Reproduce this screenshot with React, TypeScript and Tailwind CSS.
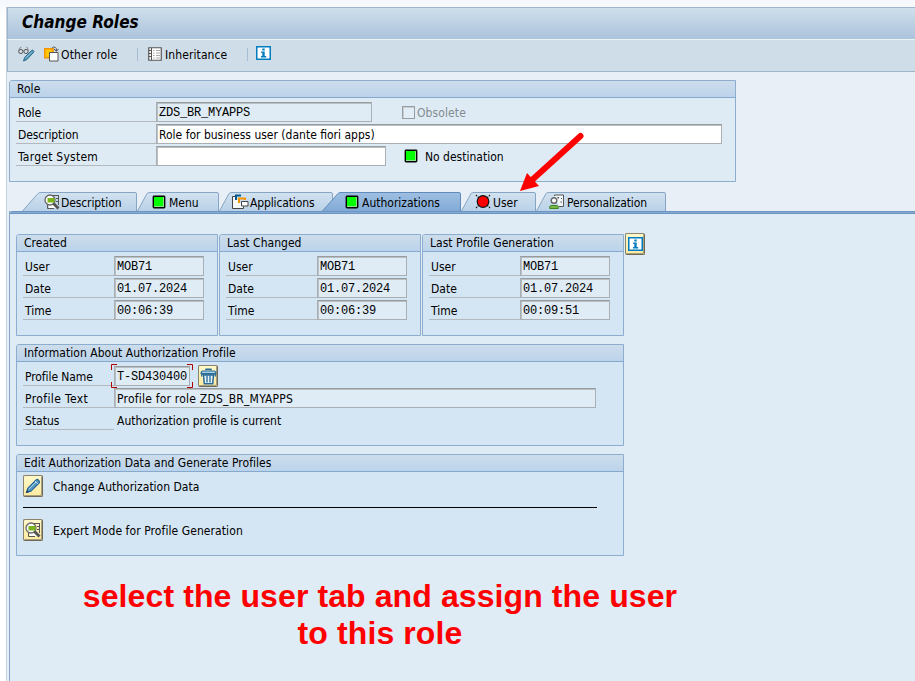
import React from "react";

const MagnifierIcon = () => (
  <svg width="16" height="16" viewBox="0 0 16 16" className="shrink-0" fill="none">
    <path d="M8 1.500h3M3.500 11v3.500H10M14.500 1v10" stroke="#555" strokeWidth="1" />
    <path d="M10 1.500h5M12 4.500h3M12 7.500h3" stroke="#555" strokeWidth="1" />
    <path d="M8 10h5v4H5v-3z" fill="#fff" />
    <circle cx="6" cy="6" r="5" fill="#fff" stroke="#666" strokeWidth="1.300" />
    <path d="M3.500 4h7v4.500h-7z" fill="#7ab51d" />
    <path d="M9.500 9.500l5 5" stroke="#555" strokeWidth="3" />
  </svg>
);

const GreenSquare = () => (
  <span className="block h-[12px] w-[12px] shrink-0 rounded-[1px] border border-black bg-[#00ff00] shadow-[inset_-1px_-1px_0_#8fe08f,0_0_0_0.4px_#000]" />
);

const StackIcon = () => (
  <svg width="17" height="16" viewBox="0 0 17 16" className="shrink-0" fill="none">
    <path d="M3 2.500H.5v12h11v-2" fill="#f7fafc" stroke="#444" />
    <path d="M4 6V1.500h5" stroke="#005b8c" strokeWidth="2" />
    <path d="M7 9V4.500h6V6" stroke="#f59300" strokeWidth="2" />
    <path d="M9.500 7.500h6.500v4.500H9.500z" fill="#fff" stroke="#444" />
  </svg>
);

const RedStatusIcon = () => (
  <svg width="16" height="15" viewBox="0 0 16 15" className="shrink-0">
    <path d="M1 1l3 3M15 1l-3 3M1 14l3-3M15 14l-3-3" stroke="#111" strokeWidth="1.100" strokeDasharray="1.400 1" />
    <circle cx="8" cy="7.500" r="5.800" fill="#ff0000" stroke="#111" strokeWidth="1.200" />
  </svg>
);

const PersonIcon = () => (
  <svg width="16" height="16" viewBox="0 0 16 16" className="shrink-0" fill="none">
    <path d="M5.500 2V1h9v11.500H10" fill="#f1f6fa" stroke="#555" />
    <path d="M8.500 3h1.500v1.500H8.500zM12 4h1v1h-1zM11.500 7.500h1.500v1h-1.500z" fill="#555" />
    <circle cx="5" cy="6.500" r="2.800" fill="#fff" stroke="#666" strokeWidth="1.400" />
    <path d="M.7 14.500v-1.500Q.7 11.500 3 11.500h4q2.300 0 2.300 1.500v1.500z" fill="#7ab648" stroke="#3d8a20" />
  </svg>
);

const InfoIcon = () => (
  <svg width="15" height="14" viewBox="0 0 15 14" className="shrink-0">
    <path d="M.75.75h13.500v12.500H.75z" fill="#fff" stroke="#007cc0" strokeWidth="1.500" />
    <path d="M6.300 2.500h2.400v2H6.300zM5.200 5.500h3.500v4.500h1.500v1.500H5V10h1.300V7H5.200z" fill="#007cc0" />
  </svg>
);

const PencilIcon = () => (
  <svg width="16" height="16" viewBox="0 0 16 16" fill="none">
    <path d="M1.500 14.500l1.300-4.300 8.300-8.300q1.200-1 2.300.2l.7.800q1 1.200 0 2.200L5.800 13.300z" fill="#5799c2" stroke="#1f5f91" strokeWidth="1.100" />
    <path d="M4 11l7-7M10 3l3 3" stroke="#a9d2ea" />
    <path d="M1 15l1.200-3 2 2z" fill="#1f3f5f" />
  </svg>
);

const TrashIcon = () => (
  <svg width="17" height="17" viewBox="0 0 17 17" fill="none">
    <path d="M6 2.500V1.200h5v1.300" stroke="#286b98" strokeWidth="1.400" />
    <path d="M2.500 3h12q1.500.5 1.500 2.500H1Q1 3.500 2.500 3z" fill="#a9cfe2" stroke="#286b98" strokeWidth="1.200" />
    <path d="M1.700 8.500V6h13.600v2.500" stroke="#286b98" strokeWidth="1.300" />
    <path d="M3.500 7l.8 8.800h8.400L13.500 7z" fill="#e8f4f8" stroke="#286b98" strokeWidth="1.500" />
    <path d="M7 7.500v7M10 7.500v7" stroke="#286b98" strokeWidth="1.300" />
  </svg>
);

const DisplayChangeIcon = () => (
  <svg width="17" height="16" viewBox="0 0 17 16" className="shrink-0" fill="none">
    <circle cx="2.800" cy="5.500" r="2.100" stroke="#555" />
    <circle cx="8" cy="5.500" r="2.100" stroke="#555" />
    <path d="M.7 5Q1 1.500 3.500 1M5 5h1M10.200 5Q10 1.500 8.500 .8" stroke="#777" strokeWidth=".9" />
    <path d="M5.500 15l1.200-3.600 6.800-6.900q1-.8 1.800 0 1 1 .2 1.900L8.800 13.600z" fill="#5799b8" stroke="#286b8a" />
    <path d="M8 11.800l5.500-5.600" stroke="#a5cfe0" strokeWidth=".8" />
  </svg>
);

const OtherRoleIcon = () => (
  <svg width="15" height="16" viewBox="0 0 15 16" className="shrink-0" fill="none">
    <path d="M.75 2.750H9v9H.75z" fill="#ffc60a" stroke="#f59300" strokeWidth="1.500" />
    <path d="M5.500 6.500h8.500v8.500H5.500z" fill="#fff" stroke="#555" />
    <path d="M8 2q1.500-1.500 3-.8Q12.800 2 12.500 5M10 3l2.500 2.300L14.500 3" stroke="#555" />
  </svg>
);

const InheritanceIcon = () => (
  <svg width="14" height="14" viewBox="0 0 14 14" className="shrink-0" fill="none">
    <path d="M.75.75h12.500v12.500H.75z" fill="#fff" stroke="#555" strokeWidth="1.200" />
    <path d="M3.500 1v12" stroke="#555" />
    <path d="M1 3.500h2M1 6.500h2M1 9.500h2" stroke="#555" />
    <path d="M5 3.500h1.500M5 6h1.500M5 8.500h1.500M5 11h1.500M8 3.500h4M8 6h4M8 8.500h4M8 11h4" stroke="#aaa" />
  </svg>
);

type TabProps = {
  label: string;
  icon: React.ReactNode;
  width: number;
  slope: number;
  active?: boolean;
  className: string;
};

function Tab({ label, icon, width, slope, active, className }: TabProps) {
  const id = "tab-" + label;
  return (
    <button className={"relative flex h-[19px] shrink-0 items-center text-left " + className}>
      <svg className="absolute inset-0" width={width} height="19" fill="none">
        <defs>
          <linearGradient id={id} x2="0" y2="1">
            <stop stopColor={active ? "#9fbfe2" : "#d2e2f0"} />
            <stop offset="1" stopColor={active ? "#82aad6" : "#b9d1e7"} />
          </linearGradient>
        </defs>
        <path
          d={`M.5 19L${slope - 2} 1.500Q${slope - 1} .5 ${slope + 1} .5H${width - 2}Q${width - 0.5} .5 ${width - 0.5} 2V19`}
          fill={`url(#${id})`}
          stroke={active ? "#5f8bba" : "#86a5c4"}
        />
      </svg>
      <span className="relative flex items-center">{icon}</span>
      <span className="relative top-px whitespace-nowrap">{label}</span>
    </button>
  );
}

function Panel({ title, className, children }: { title: string; className: string; children: React.ReactNode }) {
  return (
    <section className={"shrink-0 rounded-tl-[3px] border border-[#8dadce] " + className}>
      <h2 className="flex h-[17px] items-center rounded-tl-[2px] border-b border-[#86a9cd] bg-gradient-to-b from-[#cdddec] to-[#bbd3ea] pl-[7px] font-normal tracking-[0.03px] whitespace-nowrap">
        {title}
      </h2>
      {children}
    </section>
  );
}

const field =
  "flex h-5 items-center border border-[#a9afb3] border-t-[#979c9f] shadow-[inset_1px_1px_0_#b9bfc3] whitespace-nowrap shrink-0 ";
const mono = "font-['Liberation_Mono',monospace] text-[12px] tracking-[-0.2px] pt-[2px] ";

function Row({ label, labelClass, children }: { label: string; labelClass: string; children?: React.ReactNode }) {
  return (
    <div className="flex h-[22px] items-start">
      <div className={"flex h-5 shrink-0 items-center border-b border-[#b3b9be] pl-[2px] whitespace-nowrap " + labelClass}>
        <span className="pt-[2px]">{label}</span>
      </div>
      {children}
    </div>
  );
}

function Stamp({ title, time, className }: { title: string; time: string; className: string }) {
  return (
    <Panel title={title} className={"h-[102px] bg-[#d4e5f3] " + className}>
      <div className="pt-1 pl-[6px]">
        {[
          ["User", "MOB71"],
          ["Date", "01.07.2024"],
          ["Time", time],
        ].map(([k, v]) => (
          <Row key={k} label={k} labelClass="w-[91px]">
            <span className={field + mono + "w-[90px] bg-[#dfebf5] pl-[2px]"}>{v}</span>
          </Row>
        ))}
      </div>
    </Panel>
  );
}

const iconButton =
  "flex h-[22px] w-[20px] shrink-0 items-center justify-center rounded-[2px] border border-[#8a846c] border-r-[#6f6a58] border-b-[#6f6a58] shadow-[inset_-1px_-1px_0_#a8a07c] bg-gradient-to-b from-[#fff8c8] to-[#ffeaa0]";

export default function App() {
  return (
    <div className="relative h-[681px] w-[915px] overflow-hidden bg-gradient-to-b from-[#f4f8fc] via-white via-[3%] to-white pt-[7px] pl-[6px] font-['DejaVu_Sans_Condensed','DejaVu_Sans',sans-serif] text-[12px] leading-[14px] text-black font-stretch-condensed">
      <div className="flex h-[674px] w-[909px] flex-col border-l border-[#c5d2e2] bg-[#e8eff7]">
        <header className="flex h-[32px] shrink-0 items-center border-t border-l border-[#9db4ca] bg-gradient-to-b from-[#cfdfeb] to-[#abc3dc] pl-[14px]">
          <h1 className="pb-[4px] text-[17px] leading-5 font-bold tracking-[0.05px] italic">Change Roles</h1>
        </header>
        <nav className="flex h-[33px] shrink-0 items-center border-t border-b border-l border-t-[#eaf2f8] border-b-[#9fb5cb] border-l-[#9db4ca] bg-[#cfdde8] pb-[3px] pl-[10px]">
          <DisplayChangeIcon />
          <span className="ml-[9px]"><OtherRoleIcon /></span>
          <span className="ml-[2px] w-[76px] pt-[2px] tracking-[0.18px] whitespace-nowrap">Other role</span>
          <span className="h-[13px] w-px bg-[#a6bdd4]" />
          <span className="ml-[10px]"><InheritanceIcon /></span>
          <span className="ml-[3px] w-[82px] pt-[2px] tracking-[0.1px] whitespace-nowrap">Inheritance</span>
          <span className="h-[13px] w-px bg-[#a6bdd4]" />
          <span className="-mt-[3px] ml-[8px]"><InfoIcon /></span>
        </nav>

        <Panel title="Role" className="mt-[8px] ml-[2px] h-[102px] w-[727px] bg-[#deebf5]">
          <div className="pt-1 pl-[6px]">
            <Row label="Role" labelClass="w-[140px]">
              <span className={field + mono + "w-[216px] bg-[#dfebf5] pl-[2px]"}>ZDS_BR_MYAPPS</span>
              <span className="mt-1 ml-[30px] block h-[13px] w-[13px] border border-[#979da1] bg-[#e3edf5] shadow-[inset_1px_1px_0_#c6ccd0]" />
              <span className="ml-[2px] pt-[4px] tracking-[0.1px] text-[#858c91]">Obsolete</span>
            </Row>
            <Row label="Description" labelClass="w-[140px] tracking-[-0.1px]">
              <span className={field + "w-[566px] bg-white pt-px pl-[2px]"}>Role for business user (dante fiori apps)</span>
            </Row>
            <Row label="Target System" labelClass="w-[140px] tracking-[0.25px]">
              <span className={field + "w-[230px] bg-white"} />
              <span className="mt-[4px] ml-[19px]"><GreenSquare /></span>
              <span className="ml-[8px] pt-[4px]">No destination</span>
            </Row>
          </div>
        </Panel>

        <div className="mt-[10px] ml-[15px] flex h-[19px] shrink-0">
          <Tab label="Description" icon={<MagnifierIcon />} width={115} slope={18} className="w-[115px] gap-[1px] pl-[22px] tracking-[-0.1px]" />
          <Tab label="Menu" icon={<GreenSquare />} width={82} slope={12} className="w-[82px] gap-[4px] pl-[16px]" />
          <Tab label="Applications" icon={<StackIcon />} width={114} slope={12} className="w-[103px] gap-[1px] pl-[13px] tracking-[-0.13px]" />
          <Tab label="Authorizations" icon={<GreenSquare />} width={139} slope={18} active className="w-[139px] gap-[4px] pl-[24px]" />
          <Tab label="User" icon={<RedStatusIcon />} width={75} slope={12} className="w-[75px] gap-[2px] pl-[14px]" />
          <Tab label="Personalization" icon={<PersonIcon />} width={130} slope={12} className="w-[130px] gap-[2px] pl-[13px] tracking-[-0.13px]" />
        </div>

        <main className="ml-[2px] flex min-h-0 flex-1 flex-col border-l border-[#86a7ca] bg-[#dfebf5]">
          <div className="h-[3px] shrink-0 rounded-tl-[2px] border-y border-[#6b94c0] bg-[#85acd7]" />
          <div className="mt-[20px] ml-[6px] flex shrink-0 gap-px">
            <Stamp title="Created" time="00:06:39" className="w-[202px]" />
            <Stamp title="Last Changed" time="00:06:39" className="w-[202px]" />
            <Stamp title="Last Profile Generation" time="00:09:51" className="w-[202px]" />
            <button className={iconButton + " -mt-px"}><InfoIcon /></button>
          </div>

          <Panel title="Information About Authorization Profile" className="mt-[8px] ml-[6px] h-[102px] w-[608px] bg-[#d4e5f3]">
            <div className="pt-1 pl-[6px]">
              <Row label="Profile Name" labelClass="w-[91px] tracking-[-0.08px]">
                <span className="relative flex">
                  <span className={field + mono + "w-[76px] bg-[#dfebf5] pl-[2px]"}>T-SD430400</span>
                  <svg className="absolute -top-[2px] -left-[3px]" width="82" height="24" fill="none" stroke="#b00000">
                    <path d="M.5 6V.5H6M76 .5h5.500V6M.5 18v5.500H6M76 23.500h5.500V18" />
                  </svg>
                </span>
                <button className={iconButton + " -mt-px ml-[8px]"}><TrashIcon /></button>
              </Row>
              <Row label="Profile Text" labelClass="w-[91px] tracking-[0.38px]">
                <span className={field + "w-[482px] bg-[#dfebf5] pt-px pl-[2px] tracking-[0.22px]"}>Profile for role ZDS_BR_MYAPPS</span>
              </Row>
              <Row label="Status" labelClass="w-[91px]">
                <span className="ml-[3px] pt-[4px]">Authorization profile is current</span>
              </Row>
            </div>
          </Panel>

          <Panel title="Edit Authorization Data and Generate Profiles" className="mt-[8px] ml-[6px] h-[102px] w-[608px] bg-[#d4e5f3]">
            <div className="flex flex-col pt-[3px] pl-[6px]">
              <div className="flex items-center gap-[10px]">
                <button className={iconButton}><PencilIcon /></button>
                <span className="pt-[2px]">Change Authorization Data</span>
              </div>
              <hr className="mt-[10px] w-[574px] border-black" />
              <div className="mt-[11px] flex items-center gap-[10px]">
                <button className={iconButton}><MagnifierIcon /></button>
                <span className="pt-[2px] tracking-[0.08px]">Expert Mode for Profile Generation</span>
              </div>
            </div>
          </Panel>

          <p className="mt-[22px] ml-[20px] w-[700px] shrink-0 text-center font-['Liberation_Sans',Arial,sans-serif] text-[32px] leading-[37px] font-bold tracking-[0.1px] whitespace-nowrap text-[#ff0000]">
            select the user tab and assign the user
            <br />
            to this role
          </p>
        </main>
      </div>
      <svg className="absolute top-[130px] left-[515px]" width="75" height="65">
        <path d="M65.500 6L17 50" stroke="#ff0000" strokeWidth="6" strokeLinecap="round" />
        <path d="M5 61L12 43L24 56Z" fill="#ff0000" />
      </svg>
    </div>
  );
}
